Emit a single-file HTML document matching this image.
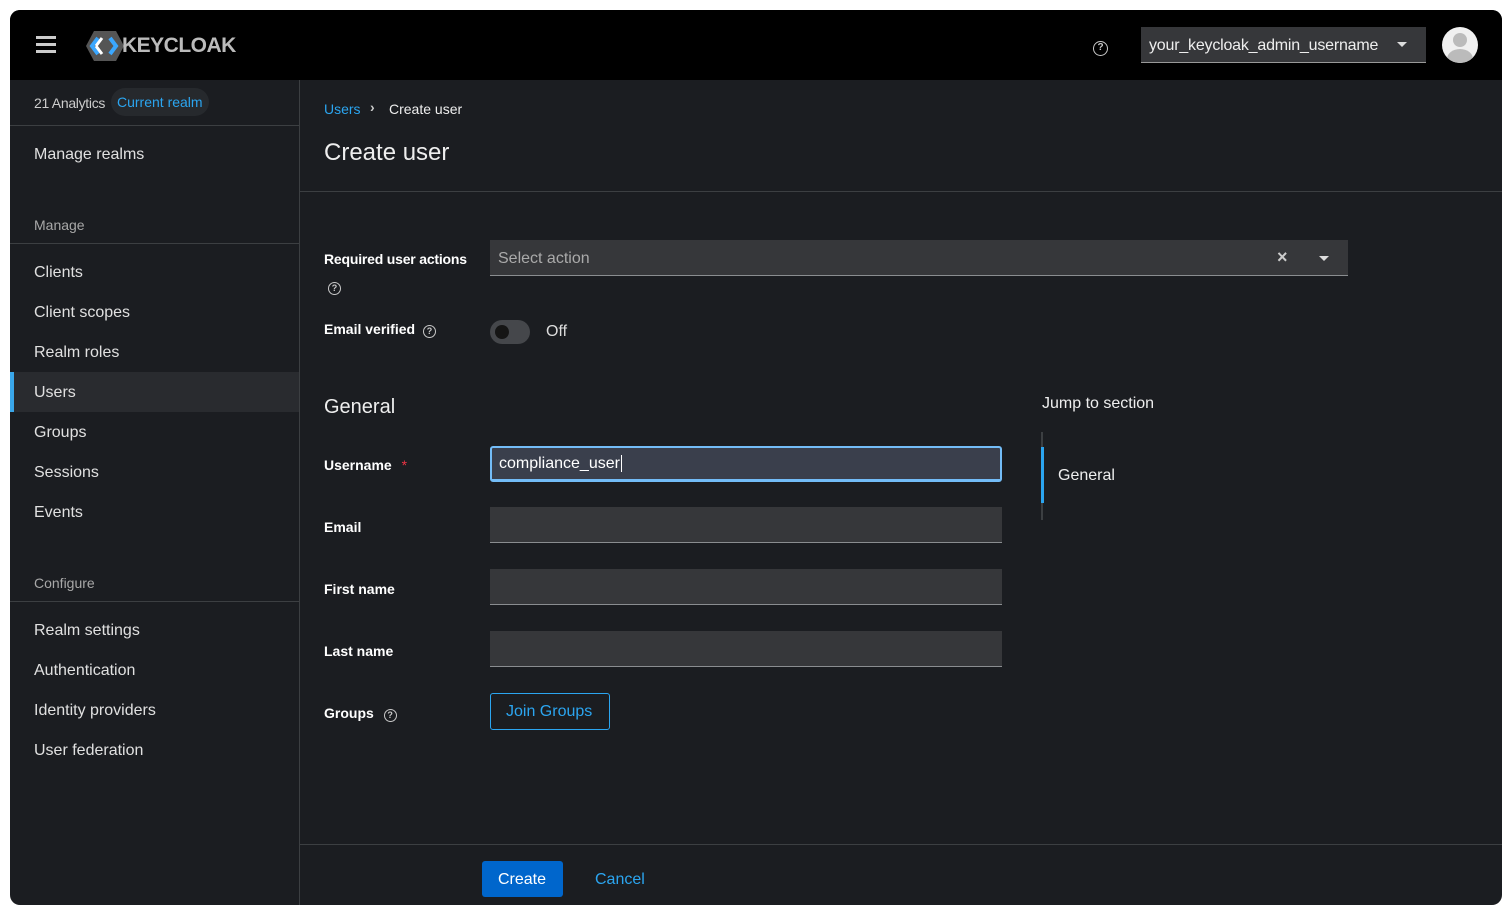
<!DOCTYPE html>
<html><head><meta charset="utf-8"><style>
*{box-sizing:border-box;margin:0;padding:0}
body{width:1512px;height:915px;background:#fff;font-family:"Liberation Sans",sans-serif;overflow:hidden;position:relative}
#f{position:absolute;left:10px;top:10px;width:1492px;height:895px;background:#1b1d21;border-radius:10px;overflow:hidden}
.a{position:absolute;white-space:nowrap}
.hdr{left:0;top:0;width:1492px;height:70px;background:#000}
.nav{color:#e0e0e0;font-size:16px}
.sec{color:#a8a8a8;font-size:14px}
.lbl{color:#fff;font-size:14px;font-weight:bold}
.inp{background:#36373a;border-bottom:1px solid #8a8d90;height:36px}
.q{display:inline-block;width:13px;height:13px;border:1.5px solid #c8c8c8;border-radius:50%;font-size:9px;line-height:10px;text-align:center;color:#c8c8c8;font-weight:bold}
</style></head><body>
<div id="f">
<div class="a hdr"></div>
<div class="a" style="left:26px;top:26px;width:20px;height:3px;background:#ccc;box-shadow:0 7px 0 #ccc,0 14px 0 #ccc"></div>
<svg class="a" style="left:76px;top:20px" width="40" height="32" viewBox="0 0 40 32"><polygon points="8,1 30,1 38,16 30,31 8,31 0,16" fill="#555"/><path d="M12 8 L6 16 L12 24" stroke="#3aa7ff" stroke-width="4" fill="none"/><path d="M24 8 L30 16 L24 24" stroke="#3aa7ff" stroke-width="4" fill="none"/><path d="M10 16 L16 8 M10 16 L16 24" stroke="#fff" stroke-width="3"/></svg>
<div class="a" style="left:112px;top:24px;color:#bbb;font-weight:bold;font-size:21px;letter-spacing:-0.5px">KEYCLOAK</div>
<div class="a" style="left:1083px;top:27px"><span class="q" style="width:15px;height:15px;font-size:10px;line-height:12px">?</span></div>
<div class="a" style="left:1131px;top:17px;width:285px;height:36px;background:#36373a;border-bottom:1px solid #999;color:#eee;font-size:16px;padding:10px 8px;letter-spacing:-0.2px">your_keycloak_admin_username</div>
<div class="a" style="left:1387px;top:32px;border:5px solid transparent;border-top-color:#ddd"></div>
<div class="a" style="left:1432px;top:17px;width:36px;height:36px;border-radius:50%;background:#f0f0f0;overflow:hidden"><div style="position:absolute;left:11px;top:6px;width:14px;height:14px;border-radius:50%;background:#bbb"></div><div style="position:absolute;left:5px;top:22px;width:26px;height:20px;border-radius:50%;background:#bbb"></div></div>
<!-- sidebar -->
<div class="a" style="left:289px;top:70px;width:1px;height:825px;background:#3c3f42"></div>
<div class="a" style="left:24px;top:85px;color:#ccc;font-size:14px;letter-spacing:-0.3px">21 Analytics</div>
<div class="a" style="left:101px;top:78px;width:98px;height:28px;border-radius:14px;background:#26292d;color:#2ba5f0;font-size:14px;padding:6px 6px">Current realm</div>
<div class="a" style="left:0;top:115px;width:289px;height:1px;background:#3c3f42"></div>
<div class="a nav" style="left:24px;top:136px">Manage realms</div>
<div class="a sec" style="left:24px;top:207px">Manage</div>
<div class="a" style="left:0;top:233px;width:289px;height:1px;background:#3c3f42"></div>
<div class="a" style="left:0;top:362px;width:289px;height:40px;background:#292b2f"></div>
<div class="a" style="left:0;top:362px;width:4px;height:40px;background:#3aa7ea"></div>
<div class="a nav" style="left:24px;top:254px">Clients</div>
<div class="a nav" style="left:24px;top:294px">Client scopes</div>
<div class="a nav" style="left:24px;top:334px">Realm roles</div>
<div class="a nav" style="left:24px;top:374px">Users</div>
<div class="a nav" style="left:24px;top:414px">Groups</div>
<div class="a nav" style="left:24px;top:454px">Sessions</div>
<div class="a nav" style="left:24px;top:494px">Events</div>
<div class="a sec" style="left:24px;top:565px">Configure</div>
<div class="a" style="left:0;top:591px;width:289px;height:1px;background:#3c3f42"></div>
<div class="a nav" style="left:24px;top:612px">Realm settings</div>
<div class="a nav" style="left:24px;top:652px">Authentication</div>
<div class="a nav" style="left:24px;top:692px">Identity providers</div>
<div class="a nav" style="left:24px;top:732px">User federation</div>
<!-- main -->
<div class="a" style="left:314px;top:91px;color:#2ba5f0;font-size:14px">Users</div>
<div class="a" style="left:360px;top:89px;color:#ccc;font-size:14px;font-weight:bold">›</div>
<div class="a" style="left:379px;top:91px;color:#eee;font-size:14px">Create user</div>
<div class="a" style="left:314px;top:129px;color:#eee;font-size:24px">Create user</div>
<div class="a" style="left:290px;top:181px;width:1202px;height:1px;background:#3c3f42"></div>
<div class="a lbl" style="left:314px;top:241px;letter-spacing:-0.2px">Required user actions</div>
<div class="a" style="left:318px;top:268px"><span class="q">?</span></div>
<div class="a inp" style="left:480px;top:230px;width:858px;color:#aaa;font-size:16px;padding:10px 8px">Select action</div>
<div class="a" style="left:1267px;top:237px;color:#ccc;font-size:18px;font-weight:bold">×</div>
<div class="a" style="left:1309px;top:246px;border:5px solid transparent;border-top-color:#ddd"></div>
<div class="a lbl" style="left:314px;top:311px">Email verified <span class="q" style="margin-left:4px">?</span></div>
<div class="a" style="left:480px;top:310px;width:40px;height:24px;border-radius:12px;background:#45474b"></div>
<div class="a" style="left:485px;top:315px;width:14px;height:14px;border-radius:50%;background:#151515"></div>
<div class="a" style="left:536px;top:313px;color:#ddd;font-size:16px">Off</div>
<div class="a" style="left:314px;top:386px;color:#eee;font-size:20px">General</div>
<div class="a lbl" style="left:314px;top:447px">Username <span style="color:#e34;margin-left:6px;font-weight:normal">*</span></div>
<div class="a" style="left:480px;top:436px;width:512px;height:36px;background:#3a3f4c;border:2px solid #73bcf7;border-bottom-width:3px;border-radius:3px;color:#fff;font-size:16px;padding:7px 7px">compliance_user<span style="border-left:1px solid #fff;margin-left:1px"></span></div>
<div class="a lbl" style="left:314px;top:509px">Email</div>
<div class="a inp" style="left:480px;top:497px;width:512px"></div>
<div class="a lbl" style="left:314px;top:571px">First name</div>
<div class="a inp" style="left:480px;top:559px;width:512px"></div>
<div class="a lbl" style="left:314px;top:633px">Last name</div>
<div class="a inp" style="left:480px;top:621px;width:512px"></div>
<div class="a lbl" style="left:314px;top:695px">Groups <span class="q" style="margin-left:6px">?</span></div>
<div class="a" style="left:480px;top:683px;width:120px;height:37px;border:1px solid #2ba5f0;border-radius:3px;color:#2ba5f0;font-size:16px;padding:9px 15px">Join Groups</div>
<div class="a" style="left:1032px;top:385px;color:#eee;font-size:16px">Jump to section</div>
<div class="a" style="left:1031px;top:422px;width:2px;height:88px;background:#3c3f42"></div>
<div class="a" style="left:1031px;top:437px;width:3px;height:56px;background:#2ba5f0"></div>
<div class="a" style="left:1048px;top:457px;color:#eee;font-size:16px">General</div>
<div class="a" style="left:290px;top:834px;width:1202px;height:1px;background:#3c3f42"></div>
<div class="a" style="left:472px;top:851px;width:81px;height:36px;background:#0066cc;border-radius:3px;color:#fff;font-size:16px;padding:10px 16px">Create</div>
<div class="a" style="left:585px;top:861px;color:#2ba5f0;font-size:16px">Cancel</div>
</div>
</body></html>
